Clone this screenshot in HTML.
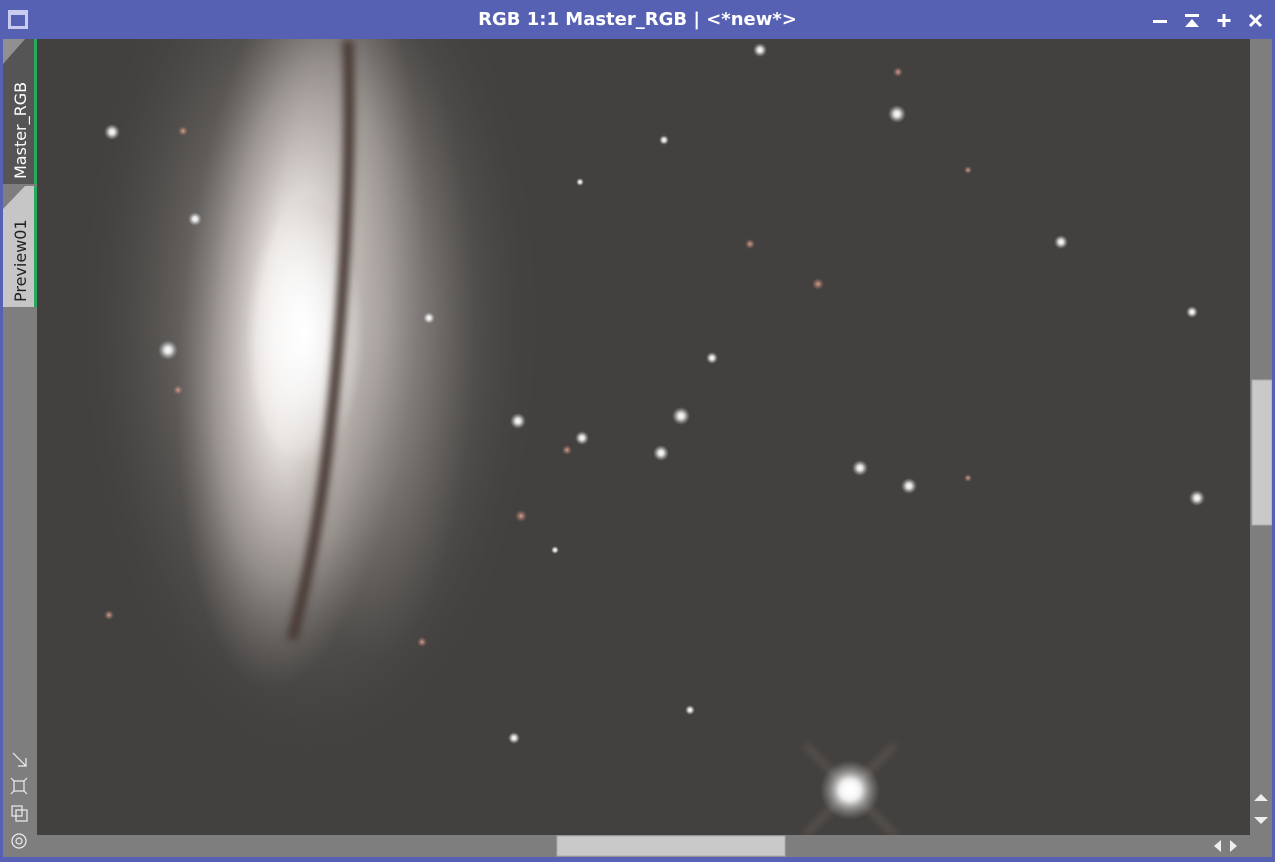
<!DOCTYPE html>
<html><head><style>
html,body{margin:0;padding:0;width:1275px;height:860px;overflow:hidden;background:#5761b3;font-family:"Liberation Sans","DejaVu Sans",sans-serif}
#title{position:absolute;left:0;top:0;width:1275px;height:39px;background:#5761b3;color:#fff;font:bold 18px "DejaVu Sans",sans-serif;text-align:center;line-height:40px}
#left{position:absolute;left:3px;top:39px;width:34px;height:818px;background:#7e7e7e}
#img{position:absolute;left:37px;top:39px;width:1213px;height:796px}
#vs{position:absolute;left:1250px;top:39px;width:22px;height:796px;background:#7e7e7e}
#hs{position:absolute;left:37px;top:835px;width:1235px;height:22px;background:#7e7e7e}
</style></head><body>
<div id="title">RGB 1:1 Master_RGB | &lt;*new*&gt;</div>
<svg style="position:absolute;left:0;top:0" width="1275" height="39">
<rect x="8" y="10" width="20" height="19" fill="#c8ccf0"/><rect x="11" y="15" width="14" height="11" fill="#5761b3"/>
<rect x="1153" y="20" width="14" height="3" fill="#fff"/>
<rect x="1185" y="14" width="14" height="3" fill="#fff"/><path d="M1185 27 L1192 19 L1199 27Z" fill="#fff"/>
<path d="M1224 14v13M1217.5 20.5h13" stroke="#fff" stroke-width="3"/>
<path d="M1250 15l11 11M1261 15l-11 11" stroke="#fff" stroke-width="3"/>
</svg>
<div id="left">
<svg width="34" height="818" style="position:absolute;left:0;top:0">
<path d="M0 25 L22 0 L34 0 L34 145 L0 145Z" fill="#555"/>
<path d="M0 25 L22 0 L0 0Z" fill="#909090"/>
<rect x="31" y="0" width="3" height="145" fill="#2aa860"/>
<path d="M0 170 L22 147 L34 147 L34 268 L0 268Z" fill="#c6c6c6"/>
<rect x="31" y="147" width="3" height="121" fill="#2aa860"/>
<text transform="translate(23,140) rotate(-90)" fill="#fff" font-size="16" font-family="DejaVu Sans">Master_RGB</text>
<text transform="translate(23,263) rotate(-90)" fill="#222" font-size="16" font-family="DejaVu Sans">Preview01</text>
<g stroke="#eee" fill="none" stroke-width="1.2">
<path d="M10 714 L23 727 M23 719 V727 H15"/>
<rect x="11" y="742" width="10" height="10"/><path d="M8 739l3 3M24 739l-3 3M8 755l3-3M24 755l-3-3"/>
<rect x="9" y="767" width="10" height="10"/><rect x="13" y="771" width="11" height="11"/>
<circle cx="16" cy="802" r="7"/><circle cx="16" cy="802" r="3"/>
</g></svg></div>
<svg id="img" width="1213" height="796" viewBox="37 39 1213 796">
<defs>
<filter id="b4" x="-50%" y="-50%" width="200%" height="200%"><feGaussianBlur stdDeviation="4"/></filter>
<radialGradient id="s"><stop offset="0" stop-color="#fff"/><stop offset=".35" stop-color="#eee" stop-opacity=".9"/><stop offset="1" stop-color="#aaa" stop-opacity="0"/></radialGradient>
<radialGradient id="r"><stop offset="0" stop-color="#d8a090"/><stop offset="1" stop-color="#a07060" stop-opacity="0"/></radialGradient>
<radialGradient id="halo"><stop offset="0" stop-color="#9a9592"/><stop offset=".5" stop-color="#75716e" stop-opacity=".8"/><stop offset="1" stop-color="#4a4746" stop-opacity="0"/></radialGradient>
<radialGradient id="side"><stop offset="0" stop-color="#b0aaa6" stop-opacity=".6"/><stop offset="1" stop-color="#8a8481" stop-opacity="0"/></radialGradient>
<radialGradient id="core"><stop offset="0" stop-color="#fff"/><stop offset=".35" stop-color="#ece6e2" stop-opacity=".95"/><stop offset=".7" stop-color="#b8b0ac" stop-opacity=".6"/><stop offset="1" stop-color="#8a8481" stop-opacity="0"/></radialGradient>
<radialGradient id="nuc"><stop offset="0" stop-color="#fff"/><stop offset=".5" stop-color="#fff" stop-opacity=".6"/><stop offset="1" stop-color="#fff" stop-opacity="0"/></radialGradient>
</defs>
<rect x="37" y="39" width="1213" height="796" fill="#43413f"/>
<ellipse cx="310" cy="320" rx="230" ry="440" fill="url(#halo)"/>
<ellipse cx="300" cy="320" rx="120" ry="370" fill="url(#core)" transform="rotate(5 300 330)"/>
<ellipse cx="375" cy="330" rx="100" ry="330" fill="url(#side)"/>
<ellipse cx="305" cy="335" rx="60" ry="130" fill="url(#nuc)"/>
<path d="M348 40 C352 150 345 300 330 430 C320 520 305 590 292 640" stroke="#4a3a36" stroke-width="11" fill="none" filter="url(#b4)"/>
<g fill="url(#s)">
<circle cx="112" cy="132" r="8"/><circle cx="195" cy="219" r="7"/><circle cx="168" cy="350" r="10"/>
<circle cx="760" cy="50" r="7"/><circle cx="897" cy="114" r="9"/><circle cx="664" cy="140" r="5"/>
<circle cx="1061" cy="242" r="7"/><circle cx="1192" cy="312" r="6"/><circle cx="429" cy="318" r="6"/>
<circle cx="712" cy="358" r="6"/><circle cx="518" cy="421" r="8"/><circle cx="681" cy="416" r="9"/>
<circle cx="582" cy="438" r="7"/><circle cx="661" cy="453" r="8"/><circle cx="860" cy="468" r="8"/>
<circle cx="909" cy="486" r="8"/><circle cx="1197" cy="498" r="8"/><circle cx="514" cy="738" r="6"/>
<circle cx="690" cy="710" r="5"/><circle cx="555" cy="550" r="4"/><circle cx="580" cy="182" r="4"/>
</g>
<g fill="url(#r)">
<circle cx="183" cy="131" r="5"/><circle cx="178" cy="390" r="5"/><circle cx="898" cy="72" r="5"/>
<circle cx="750" cy="244" r="5"/><circle cx="818" cy="284" r="6"/><circle cx="521" cy="516" r="6"/>
<circle cx="567" cy="450" r="5"/><circle cx="109" cy="615" r="5"/><circle cx="422" cy="642" r="5"/>
<circle cx="968" cy="478" r="4"/><circle cx="968" cy="170" r="4"/>
</g>
<g stroke="#c8a898" stroke-width="2" opacity=".5" filter="url(#b4)">
<path d="M805 745 L895 835 M895 745 L805 835"/></g>
<circle cx="850" cy="790" r="30" fill="url(#s)"/>
<circle cx="850" cy="790" r="10" fill="#fff" filter="url(#b4)"/>
</svg>
<div id="vs"><svg width="22" height="796"><rect x="2" y="341" width="20" height="145" fill="#c9c9c9" stroke="#aaa"/>
<path d="M4 762 L11 755 L18 762Z M4 778 L11 785 L18 778Z" fill="#eee"/></svg></div>
<div id="hs"><svg width="1235" height="22"><rect x="520" y="1" width="228" height="20" fill="#c9c9c9" stroke="#aaa"/>
<path d="M1177 11 L1184 5 L1184 17Z M1193 5 L1200 11 L1193 17Z" fill="#eee"/></svg></div>
</body></html>
